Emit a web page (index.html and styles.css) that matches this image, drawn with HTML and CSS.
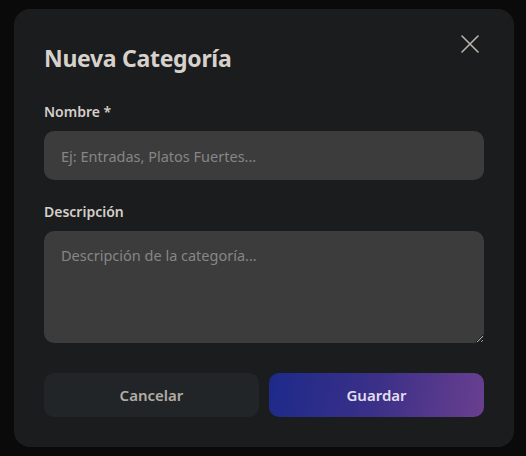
FILE: index.html
```html
<!DOCTYPE html>
<html lang="es">
<head>
<meta charset="utf-8">
<title>Nueva Categoría</title>
<link rel="stylesheet" href="styles.css">
</head>
<body>
<div class="backdrop">
  <div class="modal">
    <button class="close" aria-label="Cerrar">
      <svg width="18" height="18" viewBox="0 0 18 18"><path d="M1 1L17 17M17 1L1 17" stroke="currentColor" stroke-width="1.6" stroke-linecap="round"/></svg>
    </button>
    <h2 class="title">Nueva Categoría</h2>
    <div class="field">
      <label class="label">Nombre *</label>
      <input class="input" type="text" placeholder="Ej: Entradas, Platos Fuertes...">
    </div>
    <div class="field field-desc">
      <label class="label">Descripción</label>
      <textarea class="textarea" placeholder="Descripción de la categoría..."></textarea>
    </div>
    <div class="actions">
      <button class="btn btn-cancel">Cancelar</button>
      <button class="btn btn-save">Guardar</button>
    </div>
  </div>
</div>
</body>
</html>
```

FILE: styles.css
```css
* { box-sizing: border-box; }
html, body { margin: 0; padding: 0; }
body {
  background: #0a0a0a;
  font-family: "Noto Sans", "Open Sans", sans-serif;
  width: 526px;
  height: 456px;
  overflow: hidden;
}
.backdrop {
  padding: 9px 12px 0 14px;
}
.modal {
  position: relative;
  width: 500px;
  height: 438px;
  background: #1b1c1e;
  border-radius: 16px;
  padding: 30px;
  display: flex;
  flex-direction: column;
}
.close {
  position: absolute;
  top: 26px;
  right: 35px;
  width: 18px;
  height: 18px;
  padding: 0;
  border: 0;
  background: none;
  color: #bab4ac;
  display: flex;
}
.title {
  margin: 3px 0 0;
  font-size: 23px;
  line-height: 32px;
  font-weight: 700;
  letter-spacing: -0.3px;
  color: #d6d1cb;
}
.field {
  display: flex;
  flex-direction: column;
  margin-top: 28px;
}
.field-desc { margin-top: 22px; }
.label {
  font-size: 14px;
  line-height: 20px;
  font-weight: 600;
  color: #d4cfc9;
  margin-bottom: 9px;
}
.input, .textarea {
  width: 440px;
  background: #3c3c3c;
  border: 0;
  border-radius: 10px;
  color: #e0e0e0;
  font-family: inherit;
  font-size: 14.5px;
  padding: 0 17px;
  outline: none;
}
.input { height: 49px; }
.textarea {
  height: 112px;
  padding-top: 13px;
  line-height: 22px;
  resize: vertical;
}
.input::placeholder, .textarea::placeholder { color: #868686; }
.actions {
  display: flex;
  gap: 10px;
  margin-top: 30px;
}
.btn {
  flex: 1;
  height: 44px;
  border: 0;
  border-radius: 10px;
  font-family: inherit;
  font-size: 15px;
  font-weight: 600;
}
.btn-cancel {
  background: #222528;
  color: #b3ada5;
}
.btn-save {
  background: linear-gradient(100deg, #1d2a8a 0%, #3b3088 50%, #6a3f8f 100%);
  color: #e2def0;
}
```
